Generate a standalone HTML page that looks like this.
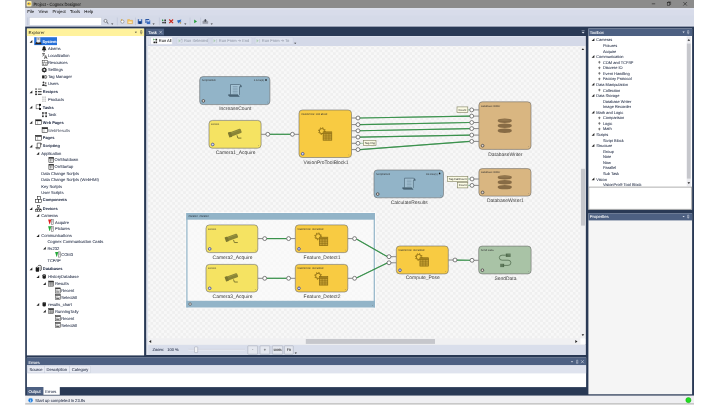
<!DOCTYPE html>
<html lang="en"><head><meta charset="utf-8"><title>Project - Cognex Designer</title>
<style>html,body{margin:0;padding:0;background:#fff;overflow:hidden}svg{display:block;will-change:transform}text{text-rendering:geometricPrecision;font-family:'Liberation Sans', sans-serif;}</style></head><body>
<svg width="720" height="405" viewBox="0 0 720 405">
<defs>
<pattern id="chk" width="5.45" height="5.45" patternUnits="userSpaceOnUse" patternTransform="translate(297.6 49.5)"><rect width="5.45" height="5.45" fill="#f8f8f8"/><rect width="2.725" height="2.725" fill="#efefef"/><rect x="2.725" y="2.725" width="2.725" height="2.725" fill="#efefef"/></pattern>
<g id="ic-script" fill="none" stroke="#465f70" stroke-width="0.65">
<path d="M2.4 10.6 V0.4 H11.2 Q13.4 0.4 13.4 2.7 H11.4 V10.8" fill="#a6c4d5"/>
<path d="M12 0.9 Q13.3 1.2 13.3 2.7 H11.6 Z" fill="#465f70" stroke="none"/>
<path d="M0.4 10.6 H9.8 Q9.8 12.3 11.2 12.3 H2 Q0.4 12.3 0.4 10.6 Z" fill="#4d6778"/>
<path d="M4.6 2.5 H9.6 M4.6 4.1 H9.6 M4.6 5.7 H9.6 M4.6 7.3 H9.6 M4.6 8.9 H9.6" stroke="#67859a" stroke-width="0.5"/></g>
<g id="ic-cam" fill="#8a8536" stroke="none">
<g transform="rotate(-20 6.9 4.3)">
<rect x="1.6" y="2.1" width="12" height="4.5" rx="1.1"/>
<rect x="0.2" y="1.7" width="3" height="5.3" rx="0.8" fill="#7d7830"/>
<rect x="3.6" y="3.0" width="9" height="0.5" fill="#a39d48"/>
</g>
<path d="M9.0 6.8 L9.9 9.6 H13.4" stroke="#7d7830" stroke-width="1.0" fill="none"/></g>
<g id="ic-vpro" fill="none" stroke="#7d600c">
<circle cx="3.8" cy="3.8" r="2.55" stroke-width="0.8"/>
<circle cx="3.8" cy="3.8" r="3.35" stroke-width="0.9" stroke-dasharray="1.2 1.431"/>
<rect x="5" y="4.6" width="8.7" height="8.3" fill="#c6a032" stroke-width="0.6"/>
<rect x="5" y="4.6" width="8.7" height="1.8" fill="#a5821e" stroke="none"/>
<path d="M5 6.4 H13.7 M5 8.6 H13.7 M5 10.8 H13.7 M7.9 6.4 V12.9 M10.8 6.4 V12.9" stroke-width="0.4"/></g>
<g id="ic-db" stroke="none">
<path id="dsk" d="M0 1.6 A6.95 1.6 0 0 1 13.9 1.6 V2.85 A6.95 1.6 0 0 1 0 2.85 Z" fill="#876b45"/>
<ellipse cx="6.95" cy="1.6" rx="6.2" ry="1.0" fill="#92764e"/>
<use href="#dsk" y="5"/>
<use href="#dsk" y="10"/></g>
<g id="ic-send" fill="none" stroke="#4f6a4c" stroke-width="0.75">
<path d="M6.9 1.7 H3.2 Q0.4 1.7 0.4 4.2 Q0.4 6.7 3.2 6.7 H9.2 Q12 6.7 12 9.3 Q12 11.9 9.2 11.9 H5"/>
<rect x="6.9" y="0.1" width="4.8" height="3.3" fill="#4f6a4c" stroke="none"/>
<rect x="1.3" y="10.3" width="3.9" height="3.3" fill="#4f6a4c" stroke="none"/>
<path d="M8.4 1.1 H11.7 M8.4 2.4 H11.7 M1.3 11.3 H4 M1.3 12.6 H4" stroke="#9db79a" stroke-width="0.35"/></g>
</defs>
<rect x="25.20" y="0.00" width="668.80" height="27.50" fill="#d5dae8" />
<rect x="25.20" y="25.60" width="668.80" height="1.90" fill="#dfe3f0" />
<rect x="25.20" y="0.00" width="668.80" height="8.10" fill="#8c8c8c" />
<rect x="26.60" y="1.00" width="5.00" height="5.60" fill="#f7ecb0" rx="1"/>
<ellipse cx="29" cy="3.8" rx="1.9" ry="1.5" fill="#e8b820"/>
<circle cx="28.6" cy="3.6" r="0.7" fill="#4a5fb0"/>
<text x="33.40" y="5.50" font-size="4.7" fill="#1a1a1a" stroke="#1a1a1a" stroke-width="0.05" textLength="47.4" lengthAdjust="spacingAndGlyphs">Project - Cognex Designer</text>
<path d="M651.8 3.8 H655.2" stroke="#111" stroke-width="0.5"/>
<rect x="667.2" y="2.6" width="2.6" height="2.6" fill="none" stroke="#111" stroke-width="0.45"/><path d="M668 2.6 V1.9 H670.6 V4.5 H669.8" fill="none" stroke="#111" stroke-width="0.45"/>
<path d="M683.3 2 L686.9 5.6 M686.9 2 L683.3 5.6" stroke="#111" stroke-width="0.5"/>
<rect x="25.20" y="8.10" width="668.80" height="7.30" fill="#d8dcea" />
<rect x="25.20" y="8.10" width="668.80" height="1.50" fill="#dde1ee" />
<text x="27.30" y="12.90" font-size="4.3" fill="#1e1e1e" stroke="#1e1e1e" stroke-width="0.05" >File</text>
<text x="38.60" y="12.90" font-size="4.3" fill="#1e1e1e" stroke="#1e1e1e" stroke-width="0.05" >View</text>
<text x="52.40" y="12.90" font-size="4.3" fill="#1e1e1e" stroke="#1e1e1e" stroke-width="0.05" >Project</text>
<text x="70.00" y="12.90" font-size="4.3" fill="#1e1e1e" stroke="#1e1e1e" stroke-width="0.05" >Tools</text>
<text x="84.30" y="12.90" font-size="4.3" fill="#1e1e1e" stroke="#1e1e1e" stroke-width="0.05" >Help</text>
<rect x="27.20" y="17.40" width="1.10" height="7.80" fill="#c3c9da" />
<rect x="29.40" y="17.60" width="72.10" height="7.60" fill="#ffffff" stroke="#c3c9d8" stroke-width="0.4"/>
<circle cx="105.5" cy="20.9" r="1.5" fill="#f4f6fb" stroke="#55585f" stroke-width="0.6"/><path d="M106.6 22.1 L108.3 23.6" stroke="#44474e" stroke-width="0.9"/>
<path d="M111.10 23.50 H113.30 L112.20 24.80 Z" fill="#333"/>
<path d="M117.30 17.6 V25.2" stroke="#b6bdd0" stroke-width="0.5"/>
<circle cx="122.4" cy="21.6" r="1.6" fill="#fbfbfb" stroke="#6d6f78" stroke-width="0.55"/><circle cx="121.6" cy="19.9" r="0.7" fill="#e0a020"/>
<path d="M127.6 19.6 H129.6 L130.2 20.3 H132.6 V23.6 H127.6 Z" fill="#f6c860" stroke="#e2a030" stroke-width="0.4"/><rect x="128.4" y="21.6" width="3.4" height="1.2" fill="#fdf3dc"/>
<path d="M135.50 17.6 V25.2" stroke="#b6bdd0" stroke-width="0.5"/>
<rect x="137.8" y="19.2" width="4.4" height="4.6" fill="#2a57a5"/><rect x="138.8" y="19.2" width="2.4" height="1.7" fill="#dfe8f7"/><rect x="138.9" y="22" width="2.2" height="1.8" fill="#16366e"/>
<rect x="145.4" y="19" width="3.8" height="4" fill="#2a57a5"/><rect x="146.6" y="20.2" width="3.8" height="4" fill="#3b6cc0" stroke="#e9eefa" stroke-width="0.3"/><rect x="147.4" y="20.2" width="2" height="1.3" fill="#dfe8f7"/>
<path d="M152.50 23.50 H154.70 L153.60 24.80 Z" fill="#333"/>
<path d="M159.40 17.6 V25.2" stroke="#b6bdd0" stroke-width="0.5"/>
<path d="M162 19.3 L163.9 20.3 L162 21.3 Z" fill="#2a9a3c"/><rect x="164.4" y="19.5" width="1.5" height="1.5" fill="#222"/><rect x="162.3" y="21.9" width="1.4" height="1.4" fill="#222"/><rect x="164.4" y="21.9" width="1.5" height="1.5" fill="#222"/><path d="M165.1 21 V21.9 M163.7 22.6 H164.4" stroke="#222" stroke-width="0.4"/>
<path d="M169.2 19.5 L173.1 23.2 M173.1 19.5 L169.2 23.2" stroke="#c9281c" stroke-width="1.15"/>
<path d="M177 20.6 L181.4 19.5 L180.4 21.4 L181.8 22 L179 22.5 L178.4 23.6 L177.8 22.2 Z" fill="#2f6fc4"/><circle cx="180.4" cy="22.9" r="0.7" fill="#b88a30"/>
<path d="M184.20 23.50 H186.40 L185.30 24.80 Z" fill="#333"/>
<path d="M190.00 17.6 V25.2" stroke="#b6bdd0" stroke-width="0.5"/>
<path d="M194.2 19.6 L197 21.4 L194.2 23.2 Z" fill="#27a03a"/>
<path d="M200.60 17.6 V25.2" stroke="#b6bdd0" stroke-width="0.5"/>
<path d="M202.8 23.6 V21.6 L203.8 20.6 H206.8 L207.8 21.6 V23.6 Z" fill="#9a9ea8" stroke="#74788a" stroke-width="0.3"/><path d="M205.3 19 L206.6 20.3 H205.9 V21.8 H204.7 V20.3 H204 Z" fill="#3c404a"/>
<path d="M210.60 23.50 H212.80 L211.70 24.80 Z" fill="#333"/>
<rect x="25.20" y="26.60" width="668.80" height="369.20" fill="#293955" />
<rect x="26.90" y="28.60" width="117.20" height="326.80" fill="#ffffff" />
<rect x="26.90" y="28.60" width="117.20" height="7.40" fill="#fff29d" />
<text x="28.60" y="33.90" font-size="4.3" fill="#33301e" stroke="#33301e" stroke-width="0" >Explorer</text>
<path d="M134.80 31.70 H137.00 L135.90 33.00 Z" fill="#333"/>
<path d="M140.6 30.6 V33 M141.9 30.6 V33 M140.2 33 H142.3 M141.25 33 V34.4 M140.6 30.6 H141.9" stroke="#333" stroke-width="0.4" fill="none"/>
<rect x="34.20" y="37.20" width="22.80" height="7.90" fill="#2670d9" />
<path d="M32.30 40.05 V42.80 H29.55 Z" fill="#222"/>
<rect x="36.70" y="37.40" width="3.4" height="5.2" fill="#ececec" stroke="#b8b8b8" stroke-width="0.4"/>
<rect x="37.40" y="38.20" width="2" height="1.5" fill="#8a8a8a"/>
<path d="M35.00 44.30 L36.50 41.90 H37.20 V42.70 H39.60 V41.90 H40.30 L41.80 44.30 Z" fill="#2a2018"/>
<text x="42.40" y="42.80" font-size="3.95" fill="#ffffff" stroke="#ffffff" stroke-width="0.05" font-weight="bold">System</text>
<path d="M44.10 45.90 Q42.40 46.30 42.50 48.70 L41.80 50.20 H46.40 L45.70 48.70 Q45.80 46.30 44.10 45.90 Z" fill="#1e1e1e"/><circle cx="44.10" cy="50.90" r="0.75" fill="#1e1e1e"/>
<text x="47.90" y="50.40" font-size="4.12" fill="#28324a" stroke="#28324a" stroke-width="0.05" >Alarms</text>
<path d="M42.10 53.50 H44.90 M43.50 52.90 V53.50 M42.30 56.30 Q44.30 55.30 44.50 53.50 M42.70 53.70 Q43.30 55.50 44.70 56.10" stroke="#222" stroke-width="0.5" fill="none"/>
<path d="M44.30 58.90 L45.70 55.50 L47.10 58.90 M44.80 57.70 H46.60" stroke="#222" stroke-width="0.6" fill="none"/>
<text x="47.90" y="57.40" font-size="4.12" fill="#28324a" stroke="#28324a" stroke-width="0.05" >Localization</text>
<rect x="42.20" y="60.30" width="5.2" height="5.2" fill="#fff" stroke="#333" stroke-width="0.5"/><path d="M42.20 62.50 H47.40 M44.30 60.30 V62.50" stroke="#333" stroke-width="0.4"/><circle cx="43.70" cy="64.10" r="0.7" fill="#333"/><circle cx="45.90" cy="64.10" r="0.7" fill="#333"/>
<text x="47.90" y="64.40" font-size="4.12" fill="#28324a" stroke="#28324a" stroke-width="0.05" >Resources</text>
<circle cx="44.30" cy="69.90" r="1.7" fill="none" stroke="#222" stroke-width="1.1"/><path d="M44.30 67.10 V72.70 M41.50 69.90 H47.10 M42.30 67.90 L46.30 71.90 M46.30 67.90 L42.30 71.90" stroke="#222" stroke-width="0.6"/><circle cx="44.30" cy="69.90" r="0.8" fill="#fff"/>
<text x="47.90" y="71.40" font-size="4.12" fill="#28324a" stroke="#28324a" stroke-width="0.05" >Settings</text>
<rect x="42.10" y="75.40" width="2.2" height="3" fill="#222"/><path d="M44.80 75.60 H46.30 Q47.40 76.90 46.30 78.20 H44.80 Z" fill="#fff" stroke="#222" stroke-width="0.6"/>
<text x="47.90" y="78.40" font-size="4.12" fill="#28324a" stroke="#28324a" stroke-width="0.05" >Tag Manager</text>
<circle cx="43.50" cy="82.50" r="0.9" fill="#333"/><path d="M42.10 86.10 Q42.10 83.90 43.50 83.90 Q44.90 83.90 44.90 86.10 Z" fill="#333"/><circle cx="45.70" cy="83.10" r="0.8" fill="#555"/><path d="M44.70 86.30 Q44.70 84.40 45.80 84.40 Q46.90 84.40 46.90 86.30 Z" fill="#555"/>
<text x="47.90" y="85.40" font-size="4.12" fill="#28324a" stroke="#28324a" stroke-width="0.05" >Users</text>
<path d="M32.30 90.45 V93.20 H29.55 Z" fill="#222"/>
<rect x="35.20" y="88.30" width="1.7" height="1.6" fill="#777"/><rect x="37.90" y="88.60" width="3.7" height="1.0" fill="#777"/>
<rect x="35.20" y="90.90" width="1.7" height="1.6" fill="#222"/><rect x="37.90" y="91.20" width="3.7" height="1.0" fill="#222"/>
<rect x="35.20" y="93.50" width="1.7" height="1.6" fill="#222"/><rect x="37.90" y="93.80" width="3.7" height="1.0" fill="#222"/>
<text x="42.80" y="93.20" font-size="3.95" fill="#28324a" stroke="#28324a" stroke-width="0.05" font-weight="bold">Recipes</text>
<rect x="42.40" y="96.60" width="1.1" height="1.1" fill="#999"/><rect x="44.60" y="96.60" width="1.1" height="1.1" fill="#999"/>
<rect x="42.40" y="98.60" width="1.1" height="1.1" fill="#999"/><rect x="44.60" y="98.60" width="1.1" height="1.1" fill="#999"/>
<rect x="42.40" y="100.60" width="1.1" height="1.1" fill="#999"/><rect x="44.60" y="100.60" width="1.1" height="1.1" fill="#999"/>
<text x="47.90" y="100.70" font-size="4.12" fill="#28324a" stroke="#28324a" stroke-width="0.05" >Products</text>
<path d="M32.30 105.75 V108.50 H29.55 Z" fill="#222"/>
<rect x="36.10" y="104.80" width="3.6" height="4" fill="none" stroke="#444" stroke-width="0.55"/><rect x="39.00" y="103.90" width="2" height="1.9" fill="#111"/><rect x="39.00" y="108.00" width="2" height="1.9" fill="#111"/>
<text x="42.80" y="108.50" font-size="3.95" fill="#28324a" stroke="#28324a" stroke-width="0.05" font-weight="bold">Tasks</text>
<rect x="42.10" y="112.20" width="1.6" height="1.6" fill="#222"/><rect x="45.30" y="112.20" width="1.6" height="1.6" fill="#222"/><rect x="42.10" y="115.50" width="1.6" height="1.6" fill="#222"/><rect x="45.30" y="115.50" width="1.6" height="1.6" fill="#222"/><path d="M43.70 113.00 H45.30 M42.90 113.80 V115.50 M46.10 113.80 V115.50" stroke="#222" stroke-width="0.5"/>
<text x="47.90" y="116.10" font-size="4.12" fill="#28324a" stroke="#28324a" stroke-width="0.05" >Task</text>
<path d="M32.30 121.05 V123.80 H29.55 Z" fill="#222"/>
<rect x="35.70" y="119.80" width="5.6" height="4.8" fill="#fff" stroke="#222" stroke-width="0.55"/><rect x="35.70" y="119.80" width="5.6" height="1.3" fill="#222"/><path d="M37.60 121.10 V124.60" stroke="#666" stroke-width="0.35"/>
<text x="42.80" y="123.80" font-size="3.95" fill="#28324a" stroke="#28324a" stroke-width="0.05" font-weight="bold">Web Pages</text>
<rect x="42.10" y="127.60" width="5.6" height="4.8" fill="#fff" stroke="#222" stroke-width="0.55"/><rect x="42.10" y="127.60" width="5.6" height="1.3" fill="#222"/><path d="M44.00 128.90 V132.40" stroke="#666" stroke-width="0.35"/>
<text x="47.90" y="131.60" font-size="4.12" fill="#5a6070" stroke="#5a6070" stroke-width="0.05" >WebResults</text>
<rect x="35.70" y="135.40" width="5.6" height="4.8" fill="#fff" stroke="#222" stroke-width="0.55"/><rect x="35.70" y="135.40" width="5.6" height="1.3" fill="#222"/><path d="M37.60 136.70 V140.20" stroke="#666" stroke-width="0.35"/>
<text x="42.80" y="139.40" font-size="3.95" fill="#28324a" stroke="#28324a" stroke-width="0.05" font-weight="bold">Pages</text>
<path d="M32.30 144.65 V147.40 H29.55 Z" fill="#222"/>
<path d="M37.20 143.10 H40.60 V147.50 M37.20 143.10 V147.50 M35.80 147.50 H39.60 V148.70 H36.60 Q35.80 148.70 35.80 147.50 M40.60 143.10 Q41.60 143.10 41.60 144.30 H40.60" stroke="#222" stroke-width="0.6" fill="none"/>
<text x="42.80" y="147.40" font-size="3.95" fill="#28324a" stroke="#28324a" stroke-width="0.05" font-weight="bold">Scripting</text>
<path d="M39.20 151.95 V154.70 H36.45 Z" fill="#222"/>
<text x="41.20" y="154.70" font-size="4.12" fill="#28324a" stroke="#28324a" stroke-width="0.05" >Application</text>
<rect x="48.90" y="157.40" width="4.8" height="5" fill="#fff" stroke="#222" stroke-width="0.55"/><rect x="48.90" y="157.40" width="4.8" height="1.2" fill="#222"/><path d="M49.80 159.70 H52.80 M49.80 160.90 H52.80 M50.40 159.10 V161.70" stroke="#444" stroke-width="0.4"/>
<text x="54.50" y="161.40" font-size="4.12" fill="#28324a" stroke="#28324a" stroke-width="0.05" >OnShutdown</text>
<rect x="48.90" y="164.30" width="4.8" height="5" fill="#fff" stroke="#222" stroke-width="0.55"/><rect x="48.90" y="164.30" width="4.8" height="1.2" fill="#222"/><path d="M49.80 166.60 H52.80 M49.80 167.80 H52.80 M50.40 166.00 V168.60" stroke="#444" stroke-width="0.4"/>
<text x="54.50" y="168.30" font-size="4.12" fill="#28324a" stroke="#28324a" stroke-width="0.05" >OnStartup</text>
<text x="41.20" y="175.00" font-size="4.12" fill="#28324a" stroke="#28324a" stroke-width="0.05" >Data Change Scripts</text>
<text x="41.20" y="181.40" font-size="4.12" fill="#28324a" stroke="#28324a" stroke-width="0.05" >Data Change Scripts (WebHMI)</text>
<text x="41.20" y="187.60" font-size="4.12" fill="#28324a" stroke="#28324a" stroke-width="0.05" >Key Scripts</text>
<text x="41.20" y="194.10" font-size="4.12" fill="#28324a" stroke="#28324a" stroke-width="0.05" >User Scripts</text>
<rect x="37.40" y="196.70" width="3" height="3" fill="#fff" stroke="#222" stroke-width="0.55"/><rect x="35.60" y="199.30" width="3" height="3" fill="#fff" stroke="#222" stroke-width="0.55"/><rect x="38.60" y="199.30" width="3" height="3" fill="#fff" stroke="#222" stroke-width="0.55"/>
<text x="42.80" y="201.20" font-size="3.95" fill="#28324a" stroke="#28324a" stroke-width="0.05" font-weight="bold">Components</text>
<path d="M32.30 207.15 V209.90 H29.55 Z" fill="#222"/>
<rect x="37.40" y="205.40" width="2" height="2" fill="none" stroke="#222" stroke-width="0.55"/><path d="M38.40 207.40 V208.80 M36.20 209.40 V208.70 H40.60 V209.40" stroke="#222" stroke-width="0.5" fill="none"/><rect x="35.40" y="209.40" width="1.7" height="2" fill="none" stroke="#222" stroke-width="0.5"/><rect x="37.60" y="209.40" width="1.7" height="2" fill="none" stroke="#222" stroke-width="0.5"/><rect x="39.80" y="209.40" width="1.7" height="2" fill="none" stroke="#222" stroke-width="0.5"/>
<text x="42.80" y="209.90" font-size="3.95" fill="#28324a" stroke="#28324a" stroke-width="0.05" font-weight="bold">Devices</text>
<path d="M39.20 213.95 V216.70 H36.45 Z" fill="#222"/>
<text x="41.20" y="216.70" font-size="4.12" fill="#28324a" stroke="#28324a" stroke-width="0.05" >Cameras</text>
<path d="M48.10 219.50 H51.30 L49.90 224.30 H49.50 Z" fill="#e02020"/>
<rect x="51.40" y="219.50" width="2" height="5.2" fill="#f4f4f4" stroke="#555" stroke-width="0.45"/><path d="M52.00 220.70 H52.80 M52.00 221.90 H52.80" stroke="#555" stroke-width="0.4"/>
<text x="55.00" y="223.60" font-size="4.12" fill="#28324a" stroke="#28324a" stroke-width="0.05" >Acquire</text>
<path d="M48.10 226.30 H51.30 L49.90 231.10 H49.50 Z" fill="#22a838"/>
<rect x="51.40" y="226.30" width="2" height="5.2" fill="#f4f4f4" stroke="#555" stroke-width="0.45"/><path d="M52.00 227.50 H52.80 M52.00 228.70 H52.80" stroke="#555" stroke-width="0.4"/>
<text x="55.00" y="230.40" font-size="4.12" fill="#28324a" stroke="#28324a" stroke-width="0.05" >Pictures</text>
<path d="M39.20 234.35 V237.10 H36.45 Z" fill="#222"/>
<text x="41.20" y="237.10" font-size="4.12" fill="#28324a" stroke="#28324a" stroke-width="0.05" >Communications</text>
<text x="47.40" y="243.30" font-size="4.12" fill="#28324a" stroke="#28324a" stroke-width="0.05" >Cognex Communication Cards</text>
<path d="M45.80 246.75 V249.50 H43.05 Z" fill="#222"/>
<text x="47.40" y="249.50" font-size="4.12" fill="#28324a" stroke="#28324a" stroke-width="0.05" >Rs232</text>
<path d="M55.10 251.90 H58.30 L56.90 256.70 H56.50 Z" fill="#22a838"/>
<rect x="58.40" y="251.90" width="2" height="5.2" fill="#f4f4f4" stroke="#555" stroke-width="0.45"/><path d="M59.00 253.10 H59.80 M59.00 254.30 H59.80" stroke="#555" stroke-width="0.4"/>
<text x="61.20" y="256.00" font-size="4.12" fill="#28324a" stroke="#28324a" stroke-width="0.05" >COM3</text>
<text x="47.40" y="262.20" font-size="4.12" fill="#28324a" stroke="#28324a" stroke-width="0.05" >TCP/IP</text>
<path d="M32.30 267.45 V270.20 H29.55 Z" fill="#222"/>
<path d="M35.70 267.70 Q35.70 266.70 37.40 266.70 Q39.10 266.70 39.10 267.70 V270.90 Q39.10 271.80 37.40 271.80 Q35.70 271.80 35.70 270.90 Z" fill="#1c1c1c"/><ellipse cx="37.40" cy="267.60" rx="1.2" ry="0.45" fill="#d8d8d8"/>
<path d="M37.80 266.10 Q38.00 265.40 39.60 265.40 Q41.30 265.40 41.30 266.40 V269.70 Q41.30 270.50 39.80 270.60" fill="none" stroke="#1c1c1c" stroke-width="0.7"/><path d="M40.00 266.70 V269.90" stroke="#555" stroke-width="0.5"/>
<text x="42.80" y="270.20" font-size="3.95" fill="#28324a" stroke="#28324a" stroke-width="0.05" font-weight="bold">Databases</text>
<path d="M39.20 275.25 V278.00 H36.45 Z" fill="#222"/>
<path d="M42.50 275.30 Q42.50 274.30 44.20 274.30 Q45.90 274.30 45.90 275.30 V277.80 Q45.90 278.70 44.20 278.70 Q42.50 278.70 42.50 277.80 Z" fill="#1c1c1c"/><ellipse cx="44.20" cy="275.15" rx="1.1" ry="0.4" fill="#c8c8c8"/>
<text x="48.30" y="278.00" font-size="4.12" fill="#28324a" stroke="#28324a" stroke-width="0.05" >HistoryDatabase</text>
<path d="M45.80 282.35 V285.10 H43.05 Z" fill="#222"/>
<rect x="48.70" y="281.00" width="5" height="5.2" fill="#d6d6d6" stroke="#444" stroke-width="0.5"/><rect x="48.70" y="281.00" width="5" height="1.4" fill="#333"/><path d="M48.70 283.60 H53.70 M48.70 284.90 H53.70 M50.40 282.30 V286.20 M52.10 282.30 V286.20" stroke="#555" stroke-width="0.35"/>
<text x="55.00" y="285.10" font-size="4.12" fill="#28324a" stroke="#28324a" stroke-width="0.05" >Results</text>
<rect x="55.30" y="287.90" width="5" height="5.2" fill="#fff" stroke="#333" stroke-width="0.5"/><rect x="55.30" y="287.90" width="5" height="1.2" fill="#444"/><path d="M55.30 290.80 H60.30 M57.00 289.10 V290.80" stroke="#555" stroke-width="0.35"/><rect x="56.20" y="291.50" width="3.2" height="0.9" fill="#555"/>
<text x="61.20" y="292.00" font-size="4.12" fill="#28324a" stroke="#28324a" stroke-width="0.05" >Recent</text>
<rect x="55.30" y="294.50" width="5" height="5.2" fill="#fff" stroke="#333" stroke-width="0.5"/><rect x="55.30" y="294.50" width="5" height="1.2" fill="#444"/><path d="M55.30 297.40 H60.30 M57.00 295.70 V297.40" stroke="#555" stroke-width="0.35"/><rect x="56.20" y="298.10" width="3.2" height="0.9" fill="#555"/>
<text x="61.20" y="298.60" font-size="4.12" fill="#28324a" stroke="#28324a" stroke-width="0.05" >SelectAll</text>
<path d="M39.20 302.95 V305.70 H36.45 Z" fill="#222"/>
<path d="M42.50 303.00 Q42.50 302.00 44.20 302.00 Q45.90 302.00 45.90 303.00 V305.50 Q45.90 306.40 44.20 306.40 Q42.50 306.40 42.50 305.50 Z" fill="#1c1c1c"/><ellipse cx="44.20" cy="302.85" rx="1.1" ry="0.4" fill="#c8c8c8"/>
<text x="48.30" y="305.70" font-size="4.12" fill="#28324a" stroke="#28324a" stroke-width="0.05" >results_chart</text>
<path d="M45.80 309.85 V312.60 H43.05 Z" fill="#222"/>
<rect x="48.70" y="308.50" width="5" height="5.2" fill="#d6d6d6" stroke="#444" stroke-width="0.5"/><rect x="48.70" y="308.50" width="5" height="1.4" fill="#333"/><path d="M48.70 311.10 H53.70 M48.70 312.40 H53.70 M50.40 309.80 V313.70 M52.10 309.80 V313.70" stroke="#555" stroke-width="0.35"/>
<text x="55.00" y="312.60" font-size="4.12" fill="#28324a" stroke="#28324a" stroke-width="0.05" >RunningTally</text>
<rect x="55.30" y="315.60" width="5" height="5.2" fill="#fff" stroke="#333" stroke-width="0.5"/><rect x="55.30" y="315.60" width="5" height="1.2" fill="#444"/><path d="M55.30 318.50 H60.30 M57.00 316.80 V318.50" stroke="#555" stroke-width="0.35"/><rect x="56.20" y="319.20" width="3.2" height="0.9" fill="#555"/>
<text x="61.20" y="319.70" font-size="4.12" fill="#28324a" stroke="#28324a" stroke-width="0.05" >Recent</text>
<rect x="55.30" y="322.50" width="5" height="5.2" fill="#fff" stroke="#333" stroke-width="0.5"/><rect x="55.30" y="322.50" width="5" height="1.2" fill="#444"/><path d="M55.30 325.40 H60.30 M57.00 323.70 V325.40" stroke="#555" stroke-width="0.35"/><rect x="56.20" y="326.10" width="3.2" height="0.9" fill="#555"/>
<text x="61.20" y="326.60" font-size="4.12" fill="#28324a" stroke="#28324a" stroke-width="0.05" >SelectAll</text>
<rect x="146.50" y="36.10" width="439.10" height="318.90" fill="#f0f0f2" />
<rect x="146.00" y="28.60" width="18.00" height="6.80" fill="#4d6082" />
<text x="148.30" y="33.90" font-size="4.2" fill="#ffffff" stroke="#ffffff" stroke-width="0.05" >Task</text>
<path d="M159.3 30.8 L162 33.6 M162 30.8 L159.3 33.6" stroke="#e8ecf5" stroke-width="0.5"/>
<path d="M581.6 30.8 H584.6" stroke="#dfe4f0" stroke-width="0.5"/><path d="M581.7 31.9 H584.5 L583.1 33.6 Z" fill="#dfe4f0"/>
<rect x="146.50" y="36.10" width="439.10" height="9.90" fill="#d4d9e8" />
<rect x="146.50" y="36.10" width="439.10" height="0.70" fill="#e0e4f0" />
<rect x="148.30" y="37.40" width="1.70" height="7.20" fill="#e3e7f1" />
<rect x="150.50" y="37.30" width="21.90" height="7.10" fill="#fdfdfe" rx="0.6" stroke="#c2c9da" stroke-width="0.3"/>
<text x="158.80" y="42.40" font-size="4.0" fill="#1e1e1e" stroke="#1e1e1e" stroke-width="0.05" >Run All</text>
<g transform="translate(1.3 0)"><path d="M152 38.6 L153.6 39.6 L152 40.6 Z" fill="#2a9a3c"/><rect x="154.2" y="38.8" width="1.6" height="1.6" fill="#222"/><rect x="152.2" y="41.6" width="1.6" height="1.6" fill="#222"/><rect x="154.2" y="41.6" width="1.6" height="1.6" fill="#222"/><path d="M155 40.4 V41.6 M153.8 42.4 H154.2" stroke="#222" stroke-width="0.4"/></g>
<rect x="177.00" y="37.30" width="31.20" height="7.10" fill="#dde2ee" rx="0.6" stroke="#c2c9da" stroke-width="0.3"/>
<text x="184.00" y="42.40" font-size="4.0" fill="#9aa0ae" stroke="#9aa0ae" stroke-width="0.05" >Run Selected</text>
<path d="M178.6 39 L180.6 40.8 L178.6 42.6 Z" fill="#a9c9ae"/><rect x="181" y="39" width="1.6" height="3.6" fill="none" stroke="#b3b8c4" stroke-width="0.4"/>
<rect x="212.30" y="37.30" width="39.50" height="7.10" fill="#dde2ee" rx="0.6" stroke="#c2c9da" stroke-width="0.3"/>
<text x="218.80" y="42.40" font-size="4.0" fill="#9aa0ae" stroke="#9aa0ae" stroke-width="0.05" >Run From ➔ End</text>
<path d="M213.6 39 L215.6 40.8 L213.6 42.6 Z" fill="#a9c9ae"/><path d="M216.6 39 V42.6" stroke="#b3b8c4" stroke-width="0.5"/>
<rect x="255.20" y="37.30" width="38.00" height="7.10" fill="#dde2ee" rx="0.6" stroke="#c2c9da" stroke-width="0.3"/>
<text x="261.80" y="42.40" font-size="4.0" fill="#9aa0ae" stroke="#9aa0ae" stroke-width="0.05" >Run From ➔ To</text>
<path d="M256.6 39 L258.6 40.8 L256.6 42.6 Z" fill="#a9c9ae"/><path d="M259.6 39 V42.6" stroke="#b3b8c4" stroke-width="0.5"/>
<path d="M294.10 42.80 H296.30 L295.20 44.10 Z" fill="#333"/>
<rect x="146.80" y="46.00" width="433.60" height="292.40" fill="url(#chk)" />
<rect x="146.50" y="36.30" width="1.60" height="318.70" fill="#dfe4ef" />
<rect x="580.40" y="46.00" width="5.20" height="292.40" fill="#f0f0f2" />
<rect x="581.00" y="168.80" width="4.00" height="56.80" fill="#c6c7cc" />
<path d="M581.6 50.1 H584.2 L582.9 48.2 Z" fill="#222"/><path d="M581.6 334.2 H584.2 L582.9 336.1 Z" fill="#222"/>
<rect x="148.00" y="338.40" width="432.40" height="6.00" fill="#f0f0f2" />
<rect x="305.80" y="339.00" width="129.20" height="4.90" fill="#c6c7cc" />
<path d="M151.2 339.9 V342.9 L149 341.4 Z" fill="#222"/><path d="M575.3 339.9 V342.9 L577.5 341.4 Z" fill="#222"/>
<rect x="580.40" y="338.40" width="5.20" height="6.00" fill="#ffffff" />
<rect x="148.10" y="344.80" width="437.50" height="10.20" fill="#d9deeb" />
<text x="152.60" y="351.20" font-size="4.0" fill="#28324a" stroke="#28324a" stroke-width="0.05" >Zoom:</text>
<text x="167.20" y="351.20" font-size="4.0" fill="#28324a" stroke="#28324a" stroke-width="0.05" >100 %</text>
<path d="M188.4 349.8 H245" stroke="#f4f6fa" stroke-width="1"/><path d="M188.4 349.4 H245" stroke="#a8afc0" stroke-width="0.35"/>
<rect x="194.50" y="346.90" width="3.20" height="5.70" fill="#f2f3f6" stroke="#8a90a0" stroke-width="0.4" rx="0.5"/>
<rect x="247.80" y="345.80" width="9.80" height="8.40" fill="#e4e7ef" stroke="#8e94a3" stroke-width="0.4" rx="0.5"/>
<text x="252.70" y="351.00" font-size="4.0" fill="#222" stroke="#222" stroke-width="0.05" text-anchor="middle">-</text>
<rect x="260.00" y="345.80" width="9.80" height="8.40" fill="#e4e7ef" stroke="#8e94a3" stroke-width="0.4" rx="0.5"/>
<text x="264.90" y="351.00" font-size="4.0" fill="#222" stroke="#222" stroke-width="0.05" text-anchor="middle">+</text>
<rect x="272.30" y="345.80" width="10.40" height="8.40" fill="#e4e7ef" stroke="#8e94a3" stroke-width="0.4" rx="0.5"/>
<text x="277.50" y="351.00" font-size="3.3" fill="#222" stroke="#222" stroke-width="0.05" text-anchor="middle">100%</text>
<rect x="284.40" y="345.80" width="8.90" height="8.40" fill="#e4e7ef" stroke="#8e94a3" stroke-width="0.4" rx="0.5"/>
<text x="288.85" y="351.00" font-size="3.6" fill="#222" stroke="#222" stroke-width="0.05" text-anchor="middle">Fit</text>
<path d="M294.70 352.60 H296.90 L295.80 353.90 Z" fill="#333"/>
<rect x="185.95" y="212.65" width="189.3" height="95.2" fill="none" stroke="#ffffff" stroke-width="0.8" stroke-opacity="0.9"/>
<rect x="186.30" y="213.00" width="188.60" height="94.50" fill="#fbfbfb" fill-opacity="0.6"/>
<rect x="186.30" y="213.00" width="188.60" height="6.70" fill="#92b4c8" />
<rect x="186.30" y="300.80" width="188.60" height="6.70" fill="#92b4c8" />
<rect x="186.30" y="213.00" width="1.20" height="94.50" fill="#92b4c8" />
<rect x="373.70" y="213.00" width="1.20" height="94.50" fill="#92b4c8" />
<text x="188.40" y="217.10" font-size="2.8" fill="#2e3a44" stroke="#2e3a44" stroke-width="0" font-style="italic">Parallel</text>
<text x="199.40" y="217.10" font-size="2.8" fill="#2e3a44" stroke="#2e3a44" stroke-width="0" font-style="italic">Parallel</text>
<circle cx="190.1" cy="304.1" r="1.3" fill="#ddd" stroke="#444" stroke-width="0.6"/>
<circle cx="372.6" cy="305.4" r="0.3" fill="#555"/>
<path d="M269.60 134.30 L290.60 134.30" stroke="#2f8443" stroke-width="1.1500000000000001" stroke-linecap="butt"/>
<path d="M269.60 134.30 L290.60 134.30" stroke="#4aa55b" stroke-width="0.5" stroke-linecap="butt"/>
<path d="M359.80 118.00 L469.90 116.10" stroke="#2f8443" stroke-width="1.1500000000000001" stroke-linecap="butt"/>
<path d="M359.80 118.00 L469.90 116.10" stroke="#4aa55b" stroke-width="0.5" stroke-linecap="butt"/>
<path d="M359.80 124.60 L469.90 122.50" stroke="#2f8443" stroke-width="1.1500000000000001" stroke-linecap="butt"/>
<path d="M359.80 124.60 L469.90 122.50" stroke="#4aa55b" stroke-width="0.5" stroke-linecap="butt"/>
<path d="M359.80 130.80 L469.90 128.60" stroke="#2f8443" stroke-width="1.1500000000000001" stroke-linecap="butt"/>
<path d="M359.80 130.80 L469.90 128.60" stroke="#4aa55b" stroke-width="0.5" stroke-linecap="butt"/>
<path d="M359.80 137.10 L469.90 135.10" stroke="#2f8443" stroke-width="1.1500000000000001" stroke-linecap="butt"/>
<path d="M359.80 137.10 L469.90 135.10" stroke="#4aa55b" stroke-width="0.5" stroke-linecap="butt"/>
<path d="M359.80 149.60 L469.90 141.40" stroke="#2f8443" stroke-width="1.1500000000000001" stroke-linecap="butt"/>
<path d="M359.80 149.60 L469.90 141.40" stroke="#4aa55b" stroke-width="0.5" stroke-linecap="butt"/>
<path d="M266.50 238.60 L286.80 238.60" stroke="#2f8443" stroke-width="1.1500000000000001" stroke-linecap="butt"/>
<path d="M266.50 238.60 L286.80 238.60" stroke="#4aa55b" stroke-width="0.5" stroke-linecap="butt"/>
<path d="M266.50 278.30 L286.80 278.30" stroke="#2f8443" stroke-width="1.1500000000000001" stroke-linecap="butt"/>
<path d="M266.50 278.30 L286.80 278.30" stroke="#4aa55b" stroke-width="0.5" stroke-linecap="butt"/>
<path d="M356.40 238.90 L387.20 256.60" stroke="#2f8443" stroke-width="1.1500000000000001" stroke-linecap="butt"/>
<path d="M356.40 238.90 L387.20 256.60" stroke="#4aa55b" stroke-width="0.5" stroke-linecap="butt"/>
<path d="M356.40 278.10 L387.20 262.90" stroke="#2f8443" stroke-width="1.1500000000000001" stroke-linecap="butt"/>
<path d="M356.40 278.10 L387.20 262.90" stroke="#4aa55b" stroke-width="0.5" stroke-linecap="butt"/>
<path d="M456.80 260.10 L470.20 260.30" stroke="#2f8443" stroke-width="1.1500000000000001" stroke-linecap="butt"/>
<path d="M456.80 260.10 L470.20 260.30" stroke="#4aa55b" stroke-width="0.5" stroke-linecap="butt"/>
<path d="M359.8 143.3 H363.6 M467.8 109.9 H469.9 M467.8 179 H470.2 M467.8 185.4 H470.2" stroke="#3b9a4c" stroke-width="0.5"/>
<path d="M261.10 134.30 H266.00" stroke="#7c7c7c" stroke-width="0.9"/>
<circle cx="267.80" cy="134.30" r="1.95" fill="#ffffff" stroke="#4c4c4c" stroke-width="0.7"/>
<path d="M294.20 134.30 H299.00" stroke="#7c7c7c" stroke-width="0.9"/>
<circle cx="292.40" cy="134.30" r="1.95" fill="#ffffff" stroke="#4c4c4c" stroke-width="0.7"/>
<path d="M351.50 118.00 H356.20" stroke="#7c7c7c" stroke-width="0.9"/>
<circle cx="358.00" cy="118.00" r="1.95" fill="#ffffff" stroke="#4c4c4c" stroke-width="0.7"/>
<path d="M351.50 124.60 H356.20" stroke="#7c7c7c" stroke-width="0.9"/>
<circle cx="358.00" cy="124.60" r="1.95" fill="#ffffff" stroke="#4c4c4c" stroke-width="0.7"/>
<path d="M351.50 130.80 H356.20" stroke="#7c7c7c" stroke-width="0.9"/>
<circle cx="358.00" cy="130.80" r="1.95" fill="#ffffff" stroke="#4c4c4c" stroke-width="0.7"/>
<path d="M351.50 137.10 H356.20" stroke="#7c7c7c" stroke-width="0.9"/>
<circle cx="358.00" cy="137.10" r="1.95" fill="#ffffff" stroke="#4c4c4c" stroke-width="0.7"/>
<path d="M351.50 143.30 H356.20" stroke="#7c7c7c" stroke-width="0.9"/>
<circle cx="358.00" cy="143.30" r="1.95" fill="#ffffff" stroke="#4c4c4c" stroke-width="0.7"/>
<path d="M351.50 149.60 H356.20" stroke="#7c7c7c" stroke-width="0.9"/>
<circle cx="358.00" cy="149.60" r="1.95" fill="#ffffff" stroke="#4c4c4c" stroke-width="0.7"/>
<path d="M473.50 109.90 H478.90" stroke="#7c7c7c" stroke-width="0.9"/>
<circle cx="471.70" cy="109.90" r="1.95" fill="#ffffff" stroke="#4c4c4c" stroke-width="0.7"/>
<path d="M473.50 116.10 H478.90" stroke="#7c7c7c" stroke-width="0.9"/>
<circle cx="471.70" cy="116.10" r="1.95" fill="#ffffff" stroke="#4c4c4c" stroke-width="0.7"/>
<path d="M473.50 122.50 H478.90" stroke="#7c7c7c" stroke-width="0.9"/>
<circle cx="471.70" cy="122.50" r="1.95" fill="#ffffff" stroke="#4c4c4c" stroke-width="0.7"/>
<path d="M473.50 128.60 H478.90" stroke="#7c7c7c" stroke-width="0.9"/>
<circle cx="471.70" cy="128.60" r="1.95" fill="#ffffff" stroke="#4c4c4c" stroke-width="0.7"/>
<path d="M473.50 135.10 H478.90" stroke="#7c7c7c" stroke-width="0.9"/>
<circle cx="471.70" cy="135.10" r="1.95" fill="#ffffff" stroke="#4c4c4c" stroke-width="0.7"/>
<path d="M473.50 141.40 H478.90" stroke="#7c7c7c" stroke-width="0.9"/>
<circle cx="471.70" cy="141.40" r="1.95" fill="#ffffff" stroke="#4c4c4c" stroke-width="0.7"/>
<path d="M473.80 179.00 H478.90" stroke="#7c7c7c" stroke-width="0.9"/>
<circle cx="472.00" cy="179.00" r="1.95" fill="#ffffff" stroke="#4c4c4c" stroke-width="0.7"/>
<path d="M473.80 185.40 H478.90" stroke="#7c7c7c" stroke-width="0.9"/>
<circle cx="472.00" cy="185.40" r="1.95" fill="#ffffff" stroke="#4c4c4c" stroke-width="0.7"/>
<path d="M257.80 238.60 H263.00" stroke="#7c7c7c" stroke-width="0.9"/>
<circle cx="264.70" cy="238.60" r="1.95" fill="#ffffff" stroke="#4c4c4c" stroke-width="0.7"/>
<path d="M290.40 238.60 H295.30" stroke="#7c7c7c" stroke-width="0.9"/>
<circle cx="288.60" cy="238.60" r="1.95" fill="#ffffff" stroke="#4c4c4c" stroke-width="0.7"/>
<path d="M347.80 238.60 H352.80" stroke="#7c7c7c" stroke-width="0.9"/>
<circle cx="354.60" cy="238.60" r="1.95" fill="#ffffff" stroke="#4c4c4c" stroke-width="0.7"/>
<path d="M257.80 278.30 H263.00" stroke="#7c7c7c" stroke-width="0.9"/>
<circle cx="264.70" cy="278.30" r="1.95" fill="#ffffff" stroke="#4c4c4c" stroke-width="0.7"/>
<path d="M290.40 278.30 H295.30" stroke="#7c7c7c" stroke-width="0.9"/>
<circle cx="288.60" cy="278.30" r="1.95" fill="#ffffff" stroke="#4c4c4c" stroke-width="0.7"/>
<path d="M347.80 278.30 H352.80" stroke="#7c7c7c" stroke-width="0.9"/>
<circle cx="354.60" cy="278.30" r="1.95" fill="#ffffff" stroke="#4c4c4c" stroke-width="0.7"/>
<path d="M390.80 256.70 H396.30" stroke="#7c7c7c" stroke-width="0.9"/>
<circle cx="389.00" cy="256.70" r="1.95" fill="#ffffff" stroke="#4c4c4c" stroke-width="0.7"/>
<path d="M390.80 262.80 H396.30" stroke="#7c7c7c" stroke-width="0.9"/>
<circle cx="389.00" cy="262.80" r="1.95" fill="#ffffff" stroke="#4c4c4c" stroke-width="0.7"/>
<path d="M448.30 260.00 H453.20" stroke="#7c7c7c" stroke-width="0.9"/>
<circle cx="455.00" cy="260.00" r="1.95" fill="#ffffff" stroke="#4c4c4c" stroke-width="0.7"/>
<path d="M473.80 260.30 H478.70" stroke="#7c7c7c" stroke-width="0.9"/>
<circle cx="472.00" cy="260.30" r="1.95" fill="#ffffff" stroke="#4c4c4c" stroke-width="0.7"/>
<rect x="199.70" y="76.60" width="70.20" height="28.00" rx="3.4" fill="#92b4c8" stroke="#6b6b6b" stroke-width="0.6"/>
<text x="201.70" y="81.45" font-size="2.7" fill="#2e2e2e" stroke="#2e2e2e" stroke-width="0" >Script Block</text>
<text x="264.10" y="81.45" font-size="2.6" fill="#2e2e2e" stroke="#2e2e2e" stroke-width="0" text-anchor="end">1.1ms(1)</text>
<path d="M265.30 79.60 q0.7 -1.2 1.4 0 v1.2 h-1.4 Z" fill="#111"/>
<use href="#ic-script" transform="translate(228.10 84.10) scale(1.000 1.000)"/>
<circle cx="203.40" cy="100.90" r="1.35" fill="#e4d8d2" stroke="#3a3a3a" stroke-width="0.75"/>
<circle cx="267.30" cy="102.00" r="0.3" fill="#555"/>
<text x="235.30" y="110.10" font-size="4.95" fill="#3a3a3a" stroke="#3a3a3a" stroke-width="0" text-anchor="middle">IncreaseCount</text>
<rect x="209.00" y="120.40" width="52.10" height="27.80" rx="3.4" fill="#f5e362" stroke="#6b6b6b" stroke-width="0.6"/>
<text x="211.00" y="125.25" font-size="2.7" fill="#2e2e2e" stroke="#2e2e2e" stroke-width="0" >Device</text>
<use href="#ic-cam" transform="translate(228.00 128.50) scale(1.000 1.000)"/>
<circle cx="212.70" cy="144.50" r="1.35" fill="#dadcfa" stroke="#2f3f94" stroke-width="0.75"/>
<circle cx="258.50" cy="145.60" r="0.3" fill="#555"/>
<text x="235.60" y="153.90" font-size="4.95" fill="#3a3a3a" stroke="#3a3a3a" stroke-width="0" text-anchor="middle">Camera1_Acquire</text>
<rect x="299.00" y="110.00" width="52.50" height="47.50" rx="3.4" fill="#f8cb42" stroke="#6b6b6b" stroke-width="0.6"/>
<text x="301.00" y="114.85" font-size="2.7" fill="#2e2e2e" stroke="#2e2e2e" stroke-width="0" >VisionPro® Tool Block</text>
<use href="#ic-vpro" transform="translate(318.10 127.30) scale(1.000 1.000)"/>
<circle cx="302.70" cy="153.80" r="1.35" fill="#dadcfa" stroke="#2f3f94" stroke-width="0.75"/>
<circle cx="348.90" cy="154.90" r="0.3" fill="#555"/>
<text x="326.00" y="163.60" font-size="4.95" fill="#3a3a3a" stroke="#3a3a3a" stroke-width="0" text-anchor="middle">VisionProToolBlock1</text>
<rect x="478.90" y="101.80" width="52.10" height="47.60" rx="3.4" fill="#d9b681" stroke="#6b6b6b" stroke-width="0.6"/>
<text x="480.90" y="106.65" font-size="2.7" fill="#2e2e2e" stroke="#2e2e2e" stroke-width="0" >Database Writer</text>
<use href="#ic-db" transform="translate(497.80 118.50) scale(1.000 1.000)"/>
<circle cx="482.60" cy="145.70" r="1.35" fill="#e4d8d2" stroke="#3a3a3a" stroke-width="0.75"/>
<circle cx="528.40" cy="146.80" r="0.3" fill="#555"/>
<text x="505.40" y="155.50" font-size="4.95" fill="#3a3a3a" stroke="#3a3a3a" stroke-width="0" text-anchor="middle">DatabaseWriter</text>
<rect x="374.00" y="170.00" width="69.50" height="27.80" rx="3.4" fill="#92b4c8" stroke="#6b6b6b" stroke-width="0.6"/>
<text x="376.00" y="174.85" font-size="2.7" fill="#2e2e2e" stroke="#2e2e2e" stroke-width="0" >Script Block</text>
<text x="437.70" y="174.85" font-size="2.6" fill="#2e2e2e" stroke="#2e2e2e" stroke-width="0" text-anchor="end">18.1ms(1)</text>
<path d="M438.90 173.00 q0.7 -1.2 1.4 0 v1.2 h-1.4 Z" fill="#111"/>
<use href="#ic-script" transform="translate(402.20 177.80) scale(0.978 0.937)"/>
<circle cx="377.70" cy="194.10" r="1.35" fill="#e4d8d2" stroke="#3a3a3a" stroke-width="0.75"/>
<circle cx="440.90" cy="195.20" r="0.3" fill="#555"/>
<text x="409.20" y="203.60" font-size="4.95" fill="#3a3a3a" stroke="#3a3a3a" stroke-width="0" text-anchor="middle">CalculateResults</text>
<rect x="478.90" y="168.60" width="52.10" height="27.50" rx="3.4" fill="#d9b681" stroke="#6b6b6b" stroke-width="0.6"/>
<text x="480.90" y="173.45" font-size="2.7" fill="#2e2e2e" stroke="#2e2e2e" stroke-width="0" >Database Writer</text>
<use href="#ic-db" transform="translate(497.80 175.20) scale(1.000 0.980)"/>
<circle cx="482.60" cy="192.40" r="1.35" fill="#e4d8d2" stroke="#3a3a3a" stroke-width="0.75"/>
<circle cx="528.40" cy="193.50" r="0.3" fill="#555"/>
<text x="505.40" y="202.20" font-size="4.95" fill="#3a3a3a" stroke="#3a3a3a" stroke-width="0" text-anchor="middle">DatabaseWriter1</text>
<rect x="206.00" y="224.90" width="51.80" height="27.70" rx="3.4" fill="#f5e362" stroke="#6b6b6b" stroke-width="0.6"/>
<text x="208.00" y="229.75" font-size="2.7" fill="#2e2e2e" stroke="#2e2e2e" stroke-width="0" >Device</text>
<use href="#ic-cam" transform="translate(224.70 233.50) scale(0.978 0.942)"/>
<circle cx="209.70" cy="248.90" r="1.35" fill="#dadcfa" stroke="#2f3f94" stroke-width="0.75"/>
<circle cx="255.20" cy="250.00" r="0.3" fill="#555"/>
<text x="232.50" y="258.60" font-size="4.95" fill="#3a3a3a" stroke="#3a3a3a" stroke-width="0" text-anchor="middle">Camera2_Acquire</text>
<rect x="206.00" y="264.40" width="51.80" height="27.60" rx="3.4" fill="#f5e362" stroke="#6b6b6b" stroke-width="0.6"/>
<text x="208.00" y="269.25" font-size="2.7" fill="#2e2e2e" stroke="#2e2e2e" stroke-width="0" >Device</text>
<use href="#ic-cam" transform="translate(224.70 273.00) scale(0.978 0.942)"/>
<circle cx="209.70" cy="288.30" r="1.35" fill="#dadcfa" stroke="#2f3f94" stroke-width="0.75"/>
<circle cx="255.20" cy="289.40" r="0.3" fill="#555"/>
<text x="232.50" y="298.10" font-size="4.95" fill="#3a3a3a" stroke="#3a3a3a" stroke-width="0" text-anchor="middle">Camera3_Acquire</text>
<rect x="295.30" y="224.90" width="52.50" height="27.70" rx="3.4" fill="#f8cb42" stroke="#6b6b6b" stroke-width="0.6"/>
<text x="297.30" y="229.75" font-size="2.7" fill="#2e2e2e" stroke="#2e2e2e" stroke-width="0" >VisionPro® Tool Block</text>
<use href="#ic-vpro" transform="translate(314.40 232.50) scale(0.978 1.015)"/>
<circle cx="299.00" cy="248.90" r="1.35" fill="#dadcfa" stroke="#2f3f94" stroke-width="0.75"/>
<circle cx="345.20" cy="250.00" r="0.3" fill="#555"/>
<text x="322.00" y="258.60" font-size="4.95" fill="#3a3a3a" stroke="#3a3a3a" stroke-width="0" text-anchor="middle">Feature_Detect1</text>
<rect x="295.30" y="264.40" width="52.50" height="27.60" rx="3.4" fill="#f8cb42" stroke="#6b6b6b" stroke-width="0.6"/>
<text x="297.30" y="269.25" font-size="2.7" fill="#2e2e2e" stroke="#2e2e2e" stroke-width="0" >VisionPro® Tool Block</text>
<use href="#ic-vpro" transform="translate(314.40 272.00) scale(0.978 1.015)"/>
<circle cx="299.00" cy="288.30" r="1.35" fill="#dadcfa" stroke="#2f3f94" stroke-width="0.75"/>
<circle cx="345.20" cy="289.40" r="0.3" fill="#555"/>
<text x="322.00" y="298.10" font-size="4.95" fill="#3a3a3a" stroke="#3a3a3a" stroke-width="0" text-anchor="middle">Feature_Detect2</text>
<rect x="396.30" y="246.00" width="52.00" height="27.90" rx="3.4" fill="#f8cb42" stroke="#6b6b6b" stroke-width="0.6"/>
<text x="398.30" y="250.85" font-size="2.7" fill="#2e2e2e" stroke="#2e2e2e" stroke-width="0" >VisionPro® Tool Block</text>
<use href="#ic-vpro" transform="translate(415.00 253.20) scale(0.986 1.000)"/>
<circle cx="400.00" cy="270.20" r="1.35" fill="#dadcfa" stroke="#2f3f94" stroke-width="0.75"/>
<circle cx="445.70" cy="271.30" r="0.3" fill="#555"/>
<text x="422.80" y="279.30" font-size="4.95" fill="#3a3a3a" stroke="#3a3a3a" stroke-width="0" text-anchor="middle">Compute_Pose</text>
<rect x="478.70" y="246.10" width="52.40" height="27.80" rx="3.4" fill="#a9c3a6" stroke="#6b6b6b" stroke-width="0.6"/>
<text x="480.70" y="250.95" font-size="2.7" fill="#2e2e2e" stroke="#2e2e2e" stroke-width="0" >Send Data</text>
<use href="#ic-send" transform="translate(498.90 253.50) scale(1.000 1.000)"/>
<circle cx="482.40" cy="270.20" r="1.35" fill="#e4d8d2" stroke="#3a3a3a" stroke-width="0.75"/>
<circle cx="528.50" cy="271.30" r="0.3" fill="#555"/>
<text x="505.50" y="279.70" font-size="4.95" fill="#3a3a3a" stroke="#3a3a3a" stroke-width="0" text-anchor="middle">SendData</text>
<rect x="363.60" y="140.60" width="12.40" height="5.00" fill="#fbfbe4" stroke="#7e7e5e" stroke-width="0.6"/>
<text x="369.80" y="143.90" font-size="2.9" fill="#2a2a2a" stroke="#2a2a2a" stroke-width="0" text-anchor="middle">Tag.Img</text>
<rect x="457.00" y="106.90" width="10.80" height="5.60" fill="#fbfbe4" stroke="#7e7e5e" stroke-width="0.6"/>
<text x="462.40" y="110.80" font-size="2.9" fill="#2a2a2a" stroke="#2a2a2a" stroke-width="0" text-anchor="middle">Count</text>
<rect x="447.60" y="176.30" width="20.20" height="5.30" fill="#fbfbe4" stroke="#7e7e5e" stroke-width="0.6"/>
<text x="457.70" y="179.90" font-size="2.9" fill="#2a2a2a" stroke="#2a2a2a" stroke-width="0" text-anchor="middle">Tag.FailCount</text>
<rect x="457.40" y="182.60" width="10.40" height="5.30" fill="#fbfbe4" stroke="#7e7e5e" stroke-width="0.6"/>
<text x="462.60" y="186.20" font-size="2.9" fill="#2a2a2a" stroke="#2a2a2a" stroke-width="0" text-anchor="middle">Count</text>
<rect x="26.90" y="357.60" width="559.20" height="29.50" fill="#ffffff" />
<rect x="26.90" y="357.60" width="559.20" height="7.70" fill="#4d6082" />
<text x="28.40" y="363.50" font-size="4.1" fill="#ffffff" stroke="#ffffff" stroke-width="0.05" >Errors</text>
<path d="M570.90 361.30 H573.10 L572.00 362.60 Z" fill="#e8ecf5"/>
<path d="M576.6 360.2 V363.2 M577.8 360.2 V363.2 M576.2 363.2 H578.2 M576.6 360.2 H577.8" stroke="#e8ecf5" stroke-width="0.4" fill="none"/>
<path d="M581 360.2 L583.8 363.2 M583.8 360.2 L581 363.2" stroke="#e8ecf5" stroke-width="0.5"/>
<rect x="26.90" y="365.30" width="559.20" height="8.10" fill="#dfe3ee" />
<rect x="27.90" y="366.00" width="16.30" height="6.90" fill="#e9ecf4" stroke="#b9c0d2" stroke-width="0.35"/>
<text x="36.05" y="371.00" font-size="4.1" fill="#28324a" stroke="#28324a" stroke-width="0.05" text-anchor="middle">Source</text>
<rect x="44.20" y="366.00" width="25.30" height="6.90" fill="#e9ecf4" stroke="#b9c0d2" stroke-width="0.35"/>
<text x="56.85" y="371.00" font-size="4.1" fill="#28324a" stroke="#28324a" stroke-width="0.05" text-anchor="middle">Description</text>
<rect x="69.50" y="366.00" width="21.20" height="6.90" fill="#e9ecf4" stroke="#b9c0d2" stroke-width="0.35"/>
<text x="80.10" y="371.00" font-size="4.1" fill="#28324a" stroke="#28324a" stroke-width="0.05" text-anchor="middle">Category</text>
<rect x="26.90" y="387.00" width="16.50" height="7.80" fill="#4d6082" />
<text x="28.40" y="392.60" font-size="4.1" fill="#ffffff" stroke="#ffffff" stroke-width="0.05" >Output</text>
<rect x="43.40" y="387.00" width="16.40" height="7.80" fill="#ffffff" />
<text x="45.20" y="392.60" font-size="4.1" fill="#28324a" stroke="#28324a" stroke-width="0.05" >Errors</text>
<rect x="588.40" y="28.50" width="103.70" height="181.10" fill="#ffffff" />
<rect x="588.40" y="28.50" width="103.70" height="7.50" fill="#4d6082" />
<text x="589.80" y="33.90" font-size="4.1" fill="#ffffff" stroke="#ffffff" stroke-width="0.05" >Toolbox</text>
<path d="M682.50 31.60 H684.70 L683.60 32.90 Z" fill="#e8ecf5"/>
<path d="M687.6 30.6 V33 M688.8 30.6 V33 M687.2 33 H689.2 M688.2 33 V34.4 M687.6 30.6 H688.8" stroke="#e8ecf5" stroke-width="0.4" fill="none"/>
<rect x="686.70" y="36.40" width="4.20" height="150.00" fill="#ececf0" />
<rect x="686.90" y="43.60" width="3.80" height="135.00" fill="#c6c7cc" />
<path d="M687.5 40.8 H690.1 L688.8 38.9 Z" fill="#222"/><path d="M687.5 182.2 H690.1 L688.8 184.1 Z" fill="#222"/>
<clipPath id="tbclip"><rect x="588.4" y="36" width="98.3" height="150.6"/></clipPath><g clip-path="url(#tbclip)">
<path d="M594.40 38.35 V41.10 H591.65 Z" fill="#222"/>
<text x="596.20" y="41.45" font-size="3.95" fill="#28324a" stroke="#28324a" stroke-width="0.05" >Cameras</text>
<text x="602.90" y="47.01" font-size="3.95" fill="#28324a" stroke="#28324a" stroke-width="0.05" >Pictures</text>
<text x="602.90" y="52.58" font-size="3.95" fill="#28324a" stroke="#28324a" stroke-width="0.05" >Acquire</text>
<path d="M594.40 55.04 V57.79 H591.65 Z" fill="#222"/>
<text x="596.20" y="58.14" font-size="3.95" fill="#28324a" stroke="#28324a" stroke-width="0.05" >Communication</text>
<path d="M599.40 61.25 V63.65 M598.50 62.15 H600.30" stroke="#444" stroke-width="0.45"/><circle cx="599.40" cy="62.15" r="0.75" fill="none" stroke="#444" stroke-width="0.35"/>
<text x="602.90" y="63.70" font-size="3.95" fill="#28324a" stroke="#28324a" stroke-width="0.05" >COM and TCP/IP</text>
<path d="M599.40 66.81 V69.22 M598.50 67.72 H600.30" stroke="#444" stroke-width="0.45"/><circle cx="599.40" cy="67.72" r="0.75" fill="none" stroke="#444" stroke-width="0.35"/>
<text x="602.90" y="69.27" font-size="3.95" fill="#28324a" stroke="#28324a" stroke-width="0.05" >Discrete IO</text>
<path d="M599.40 72.38 V74.78 M598.50 73.28 H600.30" stroke="#444" stroke-width="0.45"/><circle cx="599.40" cy="73.28" r="0.75" fill="none" stroke="#444" stroke-width="0.35"/>
<text x="602.90" y="74.83" font-size="3.95" fill="#28324a" stroke="#28324a" stroke-width="0.05" >Event Handling</text>
<path d="M599.40 77.94 V80.34 M598.50 78.84 H600.30" stroke="#444" stroke-width="0.45"/><circle cx="599.40" cy="78.84" r="0.75" fill="none" stroke="#444" stroke-width="0.35"/>
<text x="602.90" y="80.39" font-size="3.95" fill="#28324a" stroke="#28324a" stroke-width="0.05" >Factory Protocol</text>
<path d="M594.40 82.85 V85.60 H591.65 Z" fill="#222"/>
<text x="596.20" y="85.95" font-size="3.95" fill="#28324a" stroke="#28324a" stroke-width="0.05" >Data Manipulation</text>
<path d="M599.40 89.07 V91.47 M598.50 89.97 H600.30" stroke="#444" stroke-width="0.45"/><circle cx="599.40" cy="89.97" r="0.75" fill="none" stroke="#444" stroke-width="0.35"/>
<text x="602.90" y="91.52" font-size="3.95" fill="#28324a" stroke="#28324a" stroke-width="0.05" >Collection</text>
<path d="M594.40 93.98 V96.73 H591.65 Z" fill="#222"/>
<text x="596.20" y="97.08" font-size="3.95" fill="#28324a" stroke="#28324a" stroke-width="0.05" >Data Storage</text>
<text x="602.90" y="102.64" font-size="3.95" fill="#28324a" stroke="#28324a" stroke-width="0.05" >Database Writer</text>
<text x="602.90" y="108.21" font-size="3.95" fill="#28324a" stroke="#28324a" stroke-width="0.05" >Image Recorder</text>
<path d="M594.40 110.67 V113.42 H591.65 Z" fill="#222"/>
<text x="596.20" y="113.77" font-size="3.95" fill="#28324a" stroke="#28324a" stroke-width="0.05" >Math and Logic</text>
<path d="M599.40 116.88 V119.28 M598.50 117.78 H600.30" stroke="#444" stroke-width="0.45"/><circle cx="599.40" cy="117.78" r="0.75" fill="none" stroke="#444" stroke-width="0.35"/>
<text x="602.90" y="119.33" font-size="3.95" fill="#28324a" stroke="#28324a" stroke-width="0.05" >Comparison</text>
<path d="M599.40 122.44 V124.84 M598.50 123.34 H600.30" stroke="#444" stroke-width="0.45"/><circle cx="599.40" cy="123.34" r="0.75" fill="none" stroke="#444" stroke-width="0.35"/>
<text x="602.90" y="124.89" font-size="3.95" fill="#28324a" stroke="#28324a" stroke-width="0.05" >Logic</text>
<path d="M599.40 128.01 V130.41 M598.50 128.91 H600.30" stroke="#444" stroke-width="0.45"/><circle cx="599.40" cy="128.91" r="0.75" fill="none" stroke="#444" stroke-width="0.35"/>
<text x="602.90" y="130.46" font-size="3.95" fill="#28324a" stroke="#28324a" stroke-width="0.05" >Math</text>
<path d="M594.40 132.92 V135.67 H591.65 Z" fill="#222"/>
<text x="596.20" y="136.02" font-size="3.95" fill="#28324a" stroke="#28324a" stroke-width="0.05" >Scripts</text>
<text x="602.90" y="141.58" font-size="3.95" fill="#28324a" stroke="#28324a" stroke-width="0.05" >Script Block</text>
<path d="M594.40 144.05 V146.80 H591.65 Z" fill="#222"/>
<text x="596.20" y="147.15" font-size="3.95" fill="#28324a" stroke="#28324a" stroke-width="0.05" >Structure</text>
<text x="602.90" y="152.71" font-size="3.95" fill="#28324a" stroke="#28324a" stroke-width="0.05" >Group</text>
<text x="602.90" y="158.27" font-size="3.95" fill="#28324a" stroke="#28324a" stroke-width="0.05" >Note</text>
<text x="602.90" y="163.84" font-size="3.95" fill="#28324a" stroke="#28324a" stroke-width="0.05" >Now</text>
<text x="602.90" y="169.40" font-size="3.95" fill="#28324a" stroke="#28324a" stroke-width="0.05" >Parallel</text>
<text x="602.90" y="174.96" font-size="3.95" fill="#28324a" stroke="#28324a" stroke-width="0.05" >Sub Task</text>
<path d="M594.40 177.43 V180.18 H591.65 Z" fill="#222"/>
<text x="596.20" y="180.52" font-size="3.95" fill="#28324a" stroke="#28324a" stroke-width="0.05" >Vision</text>
<text x="602.90" y="186.09" font-size="3.95" fill="#28324a" stroke="#28324a" stroke-width="0.05" >VisionPro® Tool Block</text>
</g>
<rect x="588.80" y="187.10" width="102.90" height="22.20" fill="#ffffff" stroke="#9c9c9c" stroke-width="0.8"/>
<rect x="588.40" y="213.30" width="103.70" height="181.00" fill="#f5f5f5" />
<rect x="588.40" y="213.30" width="103.70" height="7.10" fill="#4d6082" />
<text x="589.80" y="218.40" font-size="4.1" fill="#ffffff" stroke="#ffffff" stroke-width="0.05" >Properties</text>
<path d="M682.50 216.00 H684.70 L683.60 217.30 Z" fill="#e8ecf5"/>
<path d="M687.6 215 V217.4 M688.8 215 V217.4 M687.2 217.4 H689.2 M688.2 217.4 V218.8 M687.6 215 H688.8" stroke="#e8ecf5" stroke-width="0.4" fill="none"/>
<rect x="25.20" y="395.70" width="668.80" height="7.70" fill="#efeff2" />
<rect x="25.20" y="403.40" width="668.80" height="0.80" fill="#a8a8a8" />
<rect x="25.20" y="404.20" width="668.80" height="0.80" fill="#d8d8d8" />
<circle cx="30.6" cy="400.3" r="2.3" fill="#1e7fe0" stroke="#bcd8f5" stroke-width="0.3"/><path d="M30.6 399.9 V401.8" stroke="#fff" stroke-width="0.65"/><circle cx="30.6" cy="398.9" r="0.4" fill="#fff"/>
<text x="35.30" y="402.20" font-size="4.1" fill="#28324a" stroke="#28324a" stroke-width="0.05" >Start up completed in 23.8s</text>
<circle cx="688.4" cy="400.1" r="2.6" fill="#1fe01f" stroke="#18a018" stroke-width="0.5"/>
</svg></body></html>
